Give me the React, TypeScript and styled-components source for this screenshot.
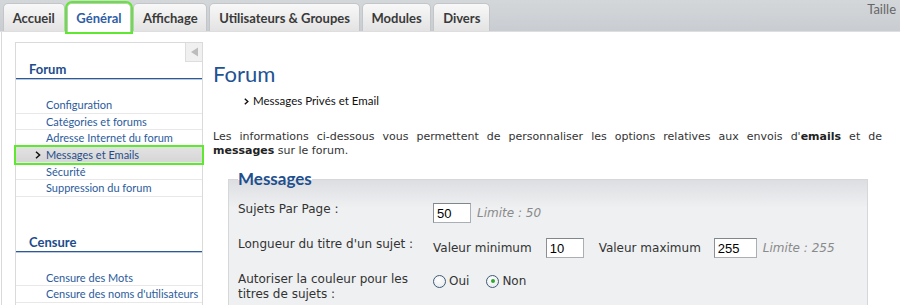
import styled, { createGlobalStyle, css } from "styled-components";

const GlobalStyle = createGlobalStyle`
  html, body {
    margin: 0;
    padding: 0;
    background: #fff;
    overflow: hidden;
  }
  body {
    font-family: "DejaVu Sans", Verdana, sans-serif;
  }
`;

const TabBar = styled.div`
  box-sizing: border-box;
  height: 32px;
  display: flex;
  align-items: flex-end;
  gap: 2px;
  padding-left: 3px;
  background: linear-gradient(#d4d7da, #c9cdd1);
  border-bottom: 1px solid #dedede;
`;

const Tab = styled.div<{ $active?: boolean }>`
  box-sizing: border-box;
  height: 28px;
  padding: 0 8.75px;
  display: flex;
  align-items: center;
  font: bold 13px Lato, sans-serif;
  color: #3a3a3a;
  background: linear-gradient(#f8f8f8, #e3e3e3);
  border: 1px solid #c3c6c9;
  border-bottom: none;
  border-radius: 5px 5px 0 0;

  ${(p) =>
    p.$active &&
    css`
      height: 29px;
      margin-bottom: -1px;
      background: #fff;
      color: #2f5ea6;
      outline: 2px solid #5fe830;
    `}
`;

const TextSize = styled.div`
  align-self: flex-start;
  margin-left: auto;
  padding: 1px 4px 0 0;
  white-space: nowrap;
  font: 13px Lato, sans-serif;
  color: #666;
`;

const Page = styled.div`
  display: flex;
  align-items: flex-start;
  gap: 10px;
  height: 273px;
  margin-left: 1px;
  border-left: 1px solid #d9d9d9;
  padding: 10px 18px 0 13px;
`;

const Sidebar = styled.nav`
  position: relative;
  flex: none;
  width: 186px;
  min-height: 300px;
  border: 1px solid #dadada;
  border-bottom: none;
`;

const Collapse = styled.div`
  position: absolute;
  top: 0;
  right: 0;
  width: 16px;
  height: 18px;
  display: flex;
  align-items: center;
  justify-content: center;
  background: #f0f0f0;
  border-left: 1px solid #dddddd;
  border-bottom: 1px solid #dddddd;
`;

const SectionTitle = styled.div`
  padding: 18px 0 1px 13px;
  font: bold 13px/16px Lato, sans-serif;
  color: #1d4c8c;
  border-bottom: 1px solid #2d5a96;
  box-shadow: 0 1px 0 #b8c8de;
`;

const ItemList = styled.ul`
  list-style: none;
  margin: 0;
  padding: 18px 0 19px;
`;

const Item = styled.li<{ $selected?: boolean }>`
  display: flex;
  align-items: center;
  height: 16.6px;
  box-sizing: border-box;
  padding-left: 30px;
  border-bottom: 1px solid #e8e8e8;
  font: 11px Lato, sans-serif;
  color: #2b5b9c;
  white-space: nowrap;

  ${(p) =>
    p.$selected &&
    css`
      padding-left: 19px;
      background: linear-gradient(#e2e2e2, #d6d6d6);
      color: #1f4d8c;
      outline: 2px solid #5fe830;
    `}
`;

const Marker = styled.svg`
  width: 6px;
  height: 8px;
  margin-right: 5px;
`;

const Main = styled.main`
  flex: 1;
  min-width: 0;
`;

const Title = styled.h1`
  margin: 19px 0 0;
  font: 22px/26px Lato, sans-serif;
  color: #1f5393;
`;

const Breadcrumb = styled.div`
  margin-top: 7px;
  padding-left: 31px;
  display: flex;
  align-items: center;
  gap: 4px;
  font: 11.5px/14px Lato, sans-serif;
  color: #111;
`;

const Intro = styled.p`
  margin: 22px 0 0;
  font: 11px/14px "DejaVu Sans", Verdana, sans-serif;
  color: #333;
  text-align: justify;

  b {
    color: #222;
  }
`;

const Fieldset = styled.fieldset`
  margin: 12px 14px 0 15px;
  padding: 0 9px 10px;
  border: 1px solid #d5d7da;
  background: linear-gradient(#dcdee1, #eef0f2 28px);
`;

const Legend = styled.legend`
  padding: 0;
  font: bold 17px/18px Lato, sans-serif;
  color: #1e4f8e;
`;

const Rows = styled.div`
  margin-top: 13px;
`;

const Row = styled.div`
  display: flex;
  align-items: flex-start;
  min-height: 35px;
`;

const Label = styled.div`
  flex: none;
  width: 195px;
  padding-top: 1px;
  font: 12px/15px "DejaVu Sans", Verdana, sans-serif;
  color: #333;
`;

const Controls = styled.div`
  display: flex;
  align-items: center;
  padding-top: 2px;
  font: 12px "DejaVu Sans", Verdana, sans-serif;
  color: #333;
`;

const TextInput = styled.input<{ $w: number; $gap?: number }>`
  box-sizing: border-box;
  width: ${(p) => p.$w}px;
  height: 20px;
  margin: 0 0 0 ${(p) => p.$gap ?? 0}px;
  padding: 1px 3px 0;
  font: 13px "Liberation Sans", Arial, sans-serif;
  color: #000;
  background: #fff;
  border: 1px solid #a9afb5;
  border-top-color: #7f868c;
  border-left-color: #8a9096;
`;

const Hint = styled.span`
  margin-left: 6px;
  font-style: italic;
  color: #8a8a8a;
`;

const Caption = styled.span<{ $gap?: number }>`
  margin-left: ${(p) => p.$gap ?? 0}px;
`;

const RadioWrap = styled.label<{ $gap?: number }>`
  display: flex;
  align-items: center;
  gap: 3px;
  margin-left: ${(p) => p.$gap ?? 0}px;
  padding-top: 1px;
`;

const RadioDot = styled.span<{ $checked?: boolean }>`
  box-sizing: border-box;
  width: 13px;
  height: 13px;
  border-radius: 50%;
  border: 1px solid #3d5a78;
  background: radial-gradient(circle at 40% 35%, #ffffff, #e4e6e9);
  display: flex;
  align-items: center;
  justify-content: center;

  &::after {
    content: "";
    width: 4px;
    height: 4px;
    border-radius: 50%;
    background: ${(p) => (p.$checked ? "#2fa82f" : "transparent")};
  }
`;

const tabs = ["Accueil", "Général", "Affichage", "Utilisateurs & Groupes", "Modules", "Divers"];

const forumLinks = [
  "Configuration",
  "Catégories et forums",
  "Adresse Internet du forum",
  "Messages et Emails",
  "Sécurité",
  "Suppression du forum",
];

const censureLinks = ["Censure des Mots", "Censure des noms d'utilisateurs"];

function Chevron() {
  return (
    <Marker viewBox="0 0 6 8">
      <polyline points="1,0.8 4.6,4 1,7.2" fill="none" stroke="#111" strokeWidth="1.5" />
    </Marker>
  );
}

export default function App() {
  return (
    <>
      <GlobalStyle />
      <TabBar>
        {tabs.map((t) => (
          <Tab key={t} $active={t === "Général"}>
            {t}
          </Tab>
        ))}
        <TextSize>Taille</TextSize>
      </TabBar>

      <Page>
        <Sidebar>
          <Collapse>
            <svg width="9" height="10" viewBox="0 0 9 10">
              <polygon points="8,0.5 8,9.5 1,5" fill="#bcbcbc" />
            </svg>
          </Collapse>

          <SectionTitle>Forum</SectionTitle>
          <ItemList>
            {forumLinks.map((l) => (
              <Item key={l} $selected={l === "Messages et Emails"}>
                {l === "Messages et Emails" && <Chevron />}
                {l}
              </Item>
            ))}
          </ItemList>

          <SectionTitle>Censure</SectionTitle>
          <ItemList>
            {censureLinks.map((l) => (
              <Item key={l}>{l}</Item>
            ))}
          </ItemList>
        </Sidebar>

        <Main>
          <Title>Forum</Title>
          <Breadcrumb>
            <svg width="5" height="7" viewBox="0 0 5 7">
              <polyline points="0.8,0.8 3.8,3.5 0.8,6.2" fill="none" stroke="#111" strokeWidth="1.4" />
            </svg>
            Messages Privés et Email
          </Breadcrumb>

          <Intro>
            Les informations ci-dessous vous permettent de personnaliser les options relatives aux
            envois d'<b>emails</b> et de <b>messages</b> sur le forum.
          </Intro>

          <Fieldset>
            <Legend>Messages</Legend>
            <Rows>
              <Row>
                <Label>Sujets Par Page :</Label>
                <Controls>
                  <TextInput $w={38} defaultValue="50" />
                  <Hint>Limite : 50</Hint>
                </Controls>
              </Row>
              <Row>
                <Label>Longueur du titre d'un sujet :</Label>
                <Controls>
                  <Caption>Valeur minimum</Caption>
                  <TextInput $w={38} $gap={14} defaultValue="10" />
                  <Caption $gap={15}>Valeur maximum</Caption>
                  <TextInput $w={43} $gap={13} defaultValue="255" />
                  <Hint>Limite : 255</Hint>
                </Controls>
              </Row>
              <Row>
                <Label>
                  Autoriser la couleur pour les
                  <br />
                  titres de sujets :
                </Label>
                <Controls>
                  <RadioWrap>
                    <RadioDot />
                    Oui
                  </RadioWrap>
                  <RadioWrap $gap={17}>
                    <RadioDot $checked />
                    Non
                  </RadioWrap>
                </Controls>
              </Row>
            </Rows>
          </Fieldset>
        </Main>
      </Page>
    </>
  );
}
